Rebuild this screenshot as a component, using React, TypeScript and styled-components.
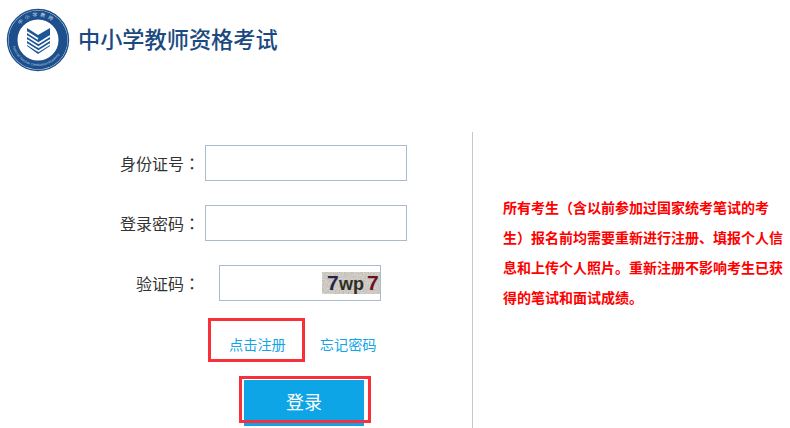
import React from 'react';
import styled, { createGlobalStyle } from 'styled-components';

const GlobalStyle = createGlobalStyle`
  html, body {
    margin: 0;
    padding: 0;
    background: #fff;
    overflow: hidden;
  }
  body {
    font-family: 'Noto Sans CJK SC', 'Liberation Sans', sans-serif;
  }
`;

const Logo = () => (
  <svg width="64" height="64" viewBox="0 0 64 64">
    <defs>
      <path id="ringTop" d="M 8.5 32 A 23.5 23.5 0 0 1 55.5 32" />
      <path id="ringBottom" d="M 6 32 A 26 26 0 0 0 58 32" />
    </defs>
    <circle cx="32" cy="32" r="30.5" fill="#fff" stroke="#1d4f8c" strokeWidth="1.4" />
    <circle cx="32" cy="32" r="25" fill="none" stroke="#1d4f8c" strokeWidth="9" />
    <circle cx="32" cy="32" r="20" fill="#fff" />
    <text fontSize="5" fill="#cfdcec" fontFamily="'Noto Sans CJK SC', sans-serif" letterSpacing="2.5">
      <textPath href="#ringTop" startOffset="22%">中小学教师</textPath>
    </text>
    <text fontSize="3.4" fill="#b9cce2" fontFamily="'Liberation Sans', sans-serif">
      <textPath href="#ringBottom" startOffset="8%">National Teacher Certification Academy</textPath>
    </text>
    <path d="M21 20 L32 27 L44 20 L44 38 L32 46 L21 38 Z" fill="#1d5596" />
    <g stroke="#fff" strokeWidth="1.5" fill="none">
      <path d="M21 24 L32 31" />
      <path d="M21 28 L32 35" />
      <path d="M21 32 L32 39" />
      <path d="M21 36 L32 43" />
      <path d="M32 35.5 L44 28" />
      <path d="M32 39.5 L44 32" />
      <path d="M32 43.5 L44 36" />
    </g>
  </svg>
);

const Captcha = () => (
  <svg width="58" height="22" viewBox="0 0 58 22">
    <defs>
      <filter id="grain" x="0" y="0" width="100%" height="100%">
        <feTurbulence type="fractalNoise" baseFrequency="0.8" numOctaves="2" seed="4" />
        <feColorMatrix values="0 0 0 0 0.45  0 0 0 0 0.44  0 0 0 0 0.4  1.6 0 0 0 -0.45" />
      </filter>
    </defs>
    <rect width="58" height="22" fill="#d8d6ce" />
    <rect width="58" height="22" filter="url(#grain)" />
    <text x="5" y="18" fontSize="21" fontWeight="700" fontFamily="'Liberation Sans', sans-serif" fill="#25254c">7</text>
    <text x="17" y="18" fontSize="18" fontWeight="700" fontFamily="'Liberation Sans', sans-serif" fill="#2e2c26">wp</text>
    <text x="45" y="18" fontSize="21" fontWeight="700" fontFamily="'Liberation Sans', sans-serif" fill="#6e1024">7</text>
  </svg>
);

export default function App() {
  return (
    <>
      <GlobalStyle />
      <Page>
        <Header>
          <Logo />
          <Title>中小学教师资格考试</Title>
        </Header>
        <Main>
          <FormColumn>
            <Row>
              <Label>身份证号<Colon>：</Colon></Label>
              <Input />
            </Row>
            <Row>
              <Label>登录密码<Colon>：</Colon></Label>
              <Input />
            </Row>
            <Row>
              <Label>验证码<Colon>：</Colon></Label>
              <CaptchaField>
                <ShortInput />
                <CaptchaImage>
                  <Captcha />
                </CaptchaImage>
              </CaptchaField>
            </Row>
            <Links>
              <RegisterLink>
                点击注册
                <Highlight $inset="-16px -19px -8px -21px" />
              </RegisterLink>
              <TextLink>忘记密码</TextLink>
            </Links>
            <LoginWrap>
              <LoginButton>登录</LoginButton>
              <Highlight $inset="-4px -7px 3px -5px" />
            </LoginWrap>
          </FormColumn>
          <Notice>
            所有考生（含以前参加过国家统考笔试的考生）报名前均需要重新进行注册、填报个人信息和上传个人照片。重新注册不影响考生已获得的笔试和面试成绩。
          </Notice>
        </Main>
      </Page>
    </>
  );
}

const Page = styled.div`
  width: 790px;
  height: 428px;
  overflow: hidden;
  background: #fff;
`;

const Header = styled.header`
  display: flex;
  align-items: center;
  gap: 8px;
  height: 132px;
  box-sizing: border-box;
  padding: 8px 0 60px 6px;
`;

const Title = styled.h1`
  margin: -5px 0 0;
  font-size: 22.2px;
  font-weight: 500;
  line-height: 30px;
  color: #1c4a80;
  white-space: nowrap;
`;

const Main = styled.main`
  display: flex;
  height: 296px;
`;

const FormColumn = styled.div`
  width: 473px;
  box-sizing: border-box;
  padding-top: 13px;
  border-right: 1px solid #c8c8c8;
`;

const Row = styled.div`
  display: flex;
  align-items: center;
  height: 36px;
  margin-bottom: 24px;
`;

const Label = styled.label`
  width: 200px;
  flex-shrink: 0;
  font-size: 16px;
  line-height: 36px;
  text-align: right;
  color: #333;
`;

/* the TC cut centres the full-width colon in its cell */
const Colon = styled.span`
  font-family: 'Noto Sans CJK TC', sans-serif;
`;

const Input = styled.input`
  width: 202px;
  height: 36px;
  margin-left: 5px;
  box-sizing: border-box;
  border: 1px solid #a9bccf;
  background: #fff;
  padding: 0 6px;
  outline: none;
`;

const CaptchaField = styled.div`
  position: relative;
  margin-left: 19px;
  height: 36px;
`;

const ShortInput = styled(Input)`
  display: block;
  width: 162px;
  margin-left: 0;
`;

const CaptchaImage = styled.span`
  position: absolute;
  right: 1px;
  top: 7px;
  display: block;
  height: 22px;
  line-height: 0;
`;

const Links = styled.div`
  display: flex;
  gap: 34px;
  padding-left: 229px;
  margin-top: 33px;
  font-size: 14.2px;
  line-height: 20px;
  color: #12a5e6;
`;

const TextLink = styled.a`
  color: inherit;
  cursor: pointer;
  white-space: nowrap;
`;

const RegisterLink = styled(TextLink)`
  position: relative;
`;

const Highlight = styled.span<{ $inset: string }>`
  position: absolute;
  inset: ${props => props.$inset};
  border: 3px solid #f7303a;
  pointer-events: none;
`;

const LoginWrap = styled.div`
  position: relative;
  width: 120px;
  margin: 26px 0 0 244px;
`;

const LoginButton = styled.button`
  display: block;
  width: 120px;
  height: 46px;
  border: 0;
  padding: 0 0 4px;
  background: #0ea5e6;
  color: #fff;
  font-family: inherit;
  font-size: 18px;
  line-height: 42px;
  cursor: pointer;
`;

const Notice = styled.p`
  width: 281px;
  margin: 60px 0 0 30px;
  font-size: 14px;
  font-weight: 700;
  line-height: 30px;
  color: #fe0000;
`;
